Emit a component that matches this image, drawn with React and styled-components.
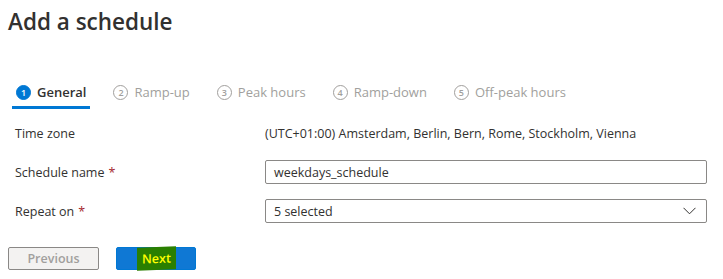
import React from 'react';
import styled, { createGlobalStyle } from 'styled-components';

const STEPS = ['General', 'Ramp-up', 'Peak hours', 'Ramp-down', 'Off-peak hours'];

const GlobalStyle = createGlobalStyle`
  body {
    margin: 0;
    background: #fff;
    font-family: 'Open Sans', 'Noto Sans', sans-serif;
    color: #323130;
  }
`;

const Page = styled.div`
  width: 723px;
  height: 279px;
  padding: 7px 16px 0 8px;
  box-sizing: border-box;
  overflow: hidden;
`;

const Title = styled.h1`
  margin: 0;
  font-size: 22.5px;
  font-weight: 600;
  line-height: 29px;
`;

const Steps = styled.div`
  display: flex;
  margin: 42px 0 0 4px;
`;

const Step = styled.div`
  display: flex;
  align-items: center;
  gap: 6px;
  height: 28px;
  padding: 0 4px;
  margin-right: 19px;
  border-bottom: 3px solid ${(p) => (p.active ? '#0078d4' : 'transparent')};
  color: ${(p) => (p.active ? '#323130' : '#a19f9d')};
  font-size: 13px;
  font-weight: ${(p) => (p.active ? 600 : 400)};
`;

const StepNum = styled.span`
  width: 15px;
  height: 15px;
  border-radius: 50%;
  box-sizing: border-box;
  display: flex;
  align-items: center;
  justify-content: center;
  font-size: 9px;
  font-weight: 600;
  background: ${(p) => (p.active ? '#0078d4' : '#fff')};
  color: ${(p) => (p.active ? '#fff' : '#a19f9d')};
  border: 1px solid ${(p) => (p.active ? '#0078d4' : '#a19f9d')};
`;

const Form = styled.div`
  display: grid;
  grid-template-columns: 250px 1fr;
  row-gap: 15px;
  margin: 12px 0 0 7px;
  font-size: 12.5px;
`;

const Label = styled.div`
  height: 24px;
  display: flex;
  align-items: center;
`;

const Star = styled.span`
  color: #a4262c;
  margin-left: 4px;
`;

const Value = styled.div`
  height: 24px;
  display: flex;
  align-items: center;
`;

const Field = styled.div`
  height: 24px;
  box-sizing: border-box;
  border: 1px solid #8a8886;
  border-radius: 2px;
  display: flex;
  align-items: center;
  justify-content: space-between;
  padding: 0 10px 0 8px;
`;

const Buttons = styled.div`
  display: flex;
  gap: 17px;
  margin-top: 24px;
`;

const Button = styled.button`
  width: ${(p) => p.w}px;
  height: 23px;
  box-sizing: border-box;
  border-radius: 2px;
  font-family: inherit;
  font-size: 12.5px;
  font-weight: 600;
  display: flex;
  align-items: center;
  justify-content: center;
  padding: 0;
  border: 1px solid ${(p) => (p.primary ? '#0078d4' : '#8a8886')};
  background: ${(p) => (p.primary ? '#0f78d4' : '#f3f2f1')};
  color: ${(p) => (p.primary ? '#fff' : '#a19f9d')};
`;

const Marker = styled.span`
  background: #2a7f00;
  color: #ffff00;
  padding: 3px 5px;
  transform: skewY(-2deg);
`;

const Chevron = () => (
  <svg width="13" height="8" viewBox="0 0 13 8" fill="none">
    <path d="M0.5 0.8 L6.5 6.8 L12.5 0.8" stroke="#323130" strokeWidth="1" />
  </svg>
);

export default function App() {
  return (
    <Page>
      <GlobalStyle />
      <Title>Add a schedule</Title>
      <Steps>
        {STEPS.map((s, i) => (
          <Step key={s} active={i === 0}>
            <StepNum active={i === 0}>{i + 1}</StepNum>
            {s}
          </Step>
        ))}
      </Steps>
      <Form>
        <Label>Time zone</Label>
        <Value>(UTC+01:00) Amsterdam, Berlin, Bern, Rome, Stockholm, Vienna</Value>
        <Label>
          Schedule name<Star>*</Star>
        </Label>
        <Field>weekdays_schedule</Field>
        <Label>
          Repeat on<Star>*</Star>
        </Label>
        <Field>
          5 selected
          <Chevron />
        </Field>
      </Form>
      <Buttons>
        <Button w={91}>Previous</Button>
        <Button w={80} primary>
          <Marker>Next</Marker>
        </Button>
      </Buttons>
    </Page>
  );
}
